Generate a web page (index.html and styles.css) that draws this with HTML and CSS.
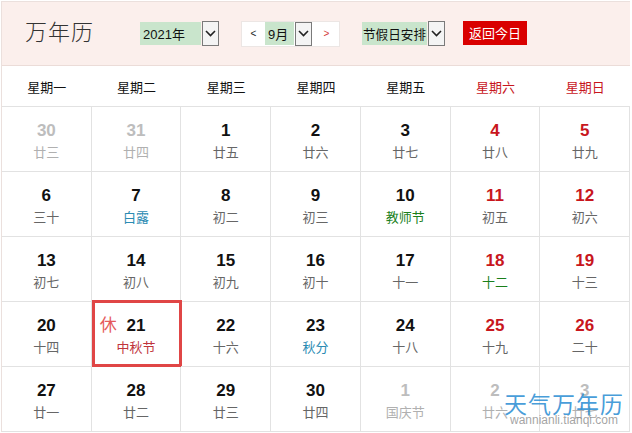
FILE: index.html
```html
<!DOCTYPE html>
<html lang="zh-CN">
<head>
  <meta charset="UTF-8" />
  <title>万年历</title>
  <link rel="stylesheet" href="styles.css">
</head>
<body>
  <div class="page">
    <header class="cal-head">
      <h1>万年历</h1>
      <div class="sel sel-year">
        <span class="sel-text">2021年</span>
        <span class="sel-arrow"><svg width="11" height="7" viewBox="0 0 11 7"><path d="M1 1 L5.5 5.5 L10 1" fill="none" stroke="#222" stroke-width="1.6"/></svg></span>
      </div>
      <div class="month-box">
        <span class="nav prev">&lt;</span>
        <div class="sel sel-month">
          <span class="sel-text">9月</span>
          <span class="sel-arrow"><svg width="11" height="7" viewBox="0 0 11 7"><path d="M1 1 L5.5 5.5 L10 1" fill="none" stroke="#222" stroke-width="1.6"/></svg></span>
        </div>
        <span class="nav next">&gt;</span>
      </div>
      <div class="sel sel-holiday">
        <span class="sel-text">节假日安排</span>
        <span class="sel-arrow"><svg width="11" height="7" viewBox="0 0 11 7"><path d="M1 1 L5.5 5.5 L10 1" fill="none" stroke="#222" stroke-width="1.6"/></svg></span>
      </div>
      <button class="today-btn">返回今日</button>
    </header>

    <div class="calendar">
      <div class="weekdays">
        <div>星期一</div>
        <div>星期二</div>
        <div>星期三</div>
        <div>星期四</div>
        <div>星期五</div>
        <div class="wk">星期六</div>
        <div class="wk">星期日</div>
      </div>
      <div class="days">
        <div class="day other"><b>30</b><span>廿三</span></div>
        <div class="day other"><b>31</b><span>廿四</span></div>
        <div class="day"><b>1</b><span>廿五</span></div>
        <div class="day"><b>2</b><span>廿六</span></div>
        <div class="day"><b>3</b><span>廿七</span></div>
        <div class="day wk"><b>4</b><span>廿八</span></div>
        <div class="day wk"><b>5</b><span>廿九</span></div>

        <div class="day"><b>6</b><span>三十</span></div>
        <div class="day"><b>7</b><span class="term">白露</span></div>
        <div class="day"><b>8</b><span>初二</span></div>
        <div class="day"><b>9</b><span>初三</span></div>
        <div class="day"><b>10</b><span class="fest">教师节</span></div>
        <div class="day wk"><b>11</b><span>初五</span></div>
        <div class="day wk"><b>12</b><span>初六</span></div>

        <div class="day"><b>13</b><span>初七</span></div>
        <div class="day"><b>14</b><span>初八</span></div>
        <div class="day"><b>15</b><span>初九</span></div>
        <div class="day"><b>16</b><span>初十</span></div>
        <div class="day"><b>17</b><span>十一</span></div>
        <div class="day wk"><b>18</b><span class="fest">十二</span></div>
        <div class="day wk"><b>19</b><span>十三</span></div>

        <div class="day"><b>20</b><span>十四</span></div>
        <div class="day today"><i class="rest">休</i><b>21</b><span class="holiday">中秋节</span></div>
        <div class="day"><b>22</b><span>十六</span></div>
        <div class="day"><b>23</b><span class="term">秋分</span></div>
        <div class="day"><b>24</b><span>十八</span></div>
        <div class="day wk"><b>25</b><span>十九</span></div>
        <div class="day wk"><b>26</b><span>二十</span></div>

        <div class="day"><b>27</b><span>廿一</span></div>
        <div class="day"><b>28</b><span>廿二</span></div>
        <div class="day"><b>29</b><span>廿三</span></div>
        <div class="day"><b>30</b><span>廿四</span></div>
        <div class="day other"><b>1</b><span>国庆节</span></div>
        <div class="day other"><b>2</b><span>廿六</span></div>
        <div class="day other"><b>3</b><span>廿七</span></div>
      </div>
      <div class="watermark">
        <div class="wm-title">天气万年历</div>
        <div class="wm-url">wannianli.tianqi.com</div>
      </div>
    </div>
  </div>
</body>
</html>
```

FILE: styles.css
```css
body {
  margin: 0;
  font-family: 'Liberation Sans', Arial, 'Noto Sans CJK SC', sans-serif;
  background: #fff;
  color: #222;
}
.page {
  margin: 1px 0 0 1px;
  width: 628px;
  border-left: 1px solid #ebe0dd;
  border-top: 1px solid #ebe0dd;
}
.cal-head {
  display: flex;
  align-items: center;
  height: 63px;
  background: #fbefec;
  border-bottom: 1px solid #ebdcd8;
  padding-left: 23px;
}
.cal-head h1 {
  margin: -8px 46px 0 0;
  font-family: 'Noto Sans CJK SC', sans-serif;
  font-weight: 300;
  font-size: 22px;
  letter-spacing: 1px;
  color: #333;
}
.sel {
  display: flex;
  align-items: center;
  flex-shrink: 0;
  height: 23px;
  font-size: 13px;
  white-space: nowrap;
}
.sel-text {
  display: flex;
  align-items: center;
  height: 100%;
  background: #c9e5cc;
  padding-left: 3px;
  color: #111;
}
.sel-year .sel-text { width: 58px; }
.sel-month .sel-text { width: 26px; }
.sel-holiday .sel-text {
  width: auto;
  padding: 0 1px;
  font-family: 'Noto Sans CJK SC', sans-serif;
  font-size: 12.6px;
}
.sel-arrow {
  display: flex;
  align-items: center;
  justify-content: center;
  width: 15px;
  height: 23px;
  border: 1px solid #7a7a7a;
  background: #f4f4f4;
  margin-left: 1px;
}
.month-box {
  display: flex;
  align-items: center;
  flex-shrink: 0;
  height: 24px;
  margin-left: 22px;
  background: #fff;
  border: 1px solid #ece6e4;
}
.nav {
  font-size: 10px;
  text-align: center;
}
.prev { width: 23px; color: #222; }
.next { width: 25px; color: #d43a3a; margin-left: 2px; }
.sel-month .sel-arrow { height: 22px; }
.sel-holiday { margin-left: 22px; }
.today-btn {
  flex-shrink: 0;
  margin-left: 18px;
  width: 64px;
  height: 24px;
  border: none;
  background: #d90000;
  color: #fff;
  font-family: 'Noto Sans CJK SC', sans-serif;
  font-size: 13px;
  padding: 0;
  margin-top: -2px;
}

.calendar {
  position: relative;
}
.weekdays {
  display: grid;
  grid-template-columns: repeat(7, 1fr);
  height: 40px;
  border-bottom: 1px solid #e2e2e2;
}
.weekdays div {
  display: flex;
  align-items: center;
  justify-content: center;
  font-family: 'Noto Sans CJK SC', sans-serif;
  font-size: 13px;
  color: #111;
}
.weekdays .wk { color: #c8161d; }
.days {
  display: grid;
  grid-template-columns: repeat(7, 1fr);
  grid-auto-rows: 65px;
}
.day {
  position: relative;
  display: flex;
  flex-direction: column;
  align-items: center;
  padding-top: 14px;
  box-sizing: border-box;
  border-right: 1px solid #e2e2e2;
  border-bottom: 1px solid #e2e2e2;
}
.day b {
  font-size: 17px;
  line-height: 20px;
  color: #111;
}
.day span {
  margin-top: 2px;
  font-family: 'Noto Sans CJK SC', sans-serif;
  font-size: 13px;
  line-height: 18px;
  color: #666;
}
.day.wk b { color: #c8161d; }
.day.other b { color: #bdbdbd; }
.day.other span { color: #b0b0b0; }
.day .term { color: #2b8bb3; }
.day .fest { color: #1a7f1a; }
.day .holiday { color: #c0343b; }
.day.today::after {
  content: "";
  position: absolute;
  top: -2px;
  left: 0;
  right: -2px;
  bottom: -1px;
  border: 3px solid #e04646;
}
.rest {
  position: absolute;
  left: 8px;
  top: 9px;
  font-style: normal;
  font-family: 'Noto Sans CJK SC', sans-serif;
  font-size: 17px;
  color: #e55b5b;
}
.watermark {
  position: absolute;
  right: 6px;
  bottom: 6px;
  text-align: center;
  pointer-events: none;
}
.wm-title {
  font-family: 'Noto Sans CJK SC', sans-serif;
  font-size: 23px;
  line-height: 22px;
  letter-spacing: 1px;
  color: rgba(40, 140, 210, 0.85);
}
.wm-url {
  font-size: 12px;
  line-height: 12px;
  color: rgba(140, 140, 140, 0.8);
}
```
